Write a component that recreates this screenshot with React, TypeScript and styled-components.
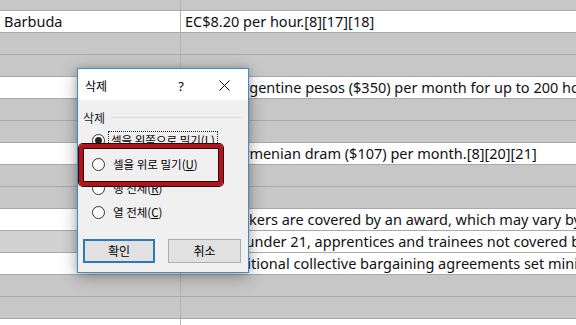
import React from 'react';
import styled, { createGlobalStyle } from 'styled-components';

const GlobalStyle = createGlobalStyle`
  html, body {
    margin: 0;
    padding: 0;
    background: #ffffff;
    overflow: hidden;
  }
  body {
    width: 576px;
    height: 325px;
  }
`;

type Tone = 'white' | 'gray' | 'light';

interface SheetRow {
  tone: Tone;
  toneA?: Tone;
  a?: string;
  b?: string;
  short?: boolean;
}

const rows: SheetRow[] = [
  { tone: 'gray', short: true },
  { tone: 'white', a: 'Barbuda', b: 'EC$8.20 per hour.[8][17][18]' },
  { tone: 'gray' },
  { tone: 'gray' },
  { tone: 'white', b: '$4,240 Argentine pesos ($350) per month for up to 200 hours.' },
  { tone: 'gray' },
  { tone: 'gray' },
  { tone: 'white', b: '55,000 Armenian dram ($107) per month.[8][20][21]' },
  { tone: 'gray' },
  { tone: 'gray' },
  { tone: 'white', b: 'Most workers are covered by an award, which may vary by industry.' },
  { tone: 'white', toneA: 'light', b: 'Workers under 21, apprentices and trainees not covered by an award.' },
  { tone: 'white', b: 'Also, additional collective bargaining agreements set minimum wages.' },
  { tone: 'gray' },
  { tone: 'gray' },
  { tone: 'white' },
];

const toneColor = (t: Tone) =>
  t === 'white' ? '#ffffff' : t === 'light' ? '#d2d2d2' : '#c7c7c7';

const Page = styled.div`
  position: relative;
  width: 576px;
  height: 325px;
  overflow: hidden;
  font-family: 'Noto Sans', 'Noto Sans CJK KR', sans-serif;
`;

const Sheet = styled.div`
  display: flex;
  flex-direction: column;
`;

const Row = styled.div<{ $short?: boolean }>`
  display: grid;
  grid-template-columns: 181px 1fr;
  height: ${({ $short }) => ($short ? '10px' : '21px')};
  border-bottom: 1px solid #a9a9a9;
  flex-shrink: 0;
`;

const Cell = styled.div<{ $tone: Tone; $first?: boolean }>`
  background: ${({ $tone }) => toneColor($tone)};
  border-right: ${({ $first }) => ($first ? '1px solid #b4b4b4' : 'none')};
  padding-left: 4px;
  font-size: 14.5px;
  line-height: 21px;
  color: #111;
  white-space: nowrap;
  overflow: hidden;
`;

const Dialog = styled.div`
  position: absolute;
  left: 77px;
  top: 68px;
  width: 170px;
  height: 203px;
  border: 1px solid #3f8ccb;
  background: #f0f0f0;
  box-shadow: 0 4px 16px rgba(0, 0, 0, 0.32), 0 0 6px rgba(0, 0, 0, 0.16);
  display: flex;
  flex-direction: column;
  font-family: 'Noto Sans CJK KR', 'Noto Sans', sans-serif;
  font-size: 12px;
  color: #000;
`;

const TitleBar = styled.div`
  height: 31px;
  background: #ffffff;
  display: flex;
  align-items: center;
  padding: 2px 0 0 7px;
  box-sizing: border-box;
`;

const Title = styled.span`
  flex: 1;
  font-size: 12px;
`;

const HelpMark = styled.span`
  width: 28px;
  font-size: 13px;
  font-family: 'Noto Sans', sans-serif;
  text-align: center;
  margin-right: 16px;
`;

const CloseButton = styled.span`
  width: 26px;
  display: flex;
  justify-content: center;
  margin-right: 11px;
`;

const Body = styled.div`
  flex: 1;
  display: flex;
  flex-direction: column;
  padding: 9px 7px 9px 5px;
`;

const GroupHeader = styled.div`
  display: flex;
  align-items: center;
  gap: 6px;
  height: 16px;
  color: #222;
`;

const GroupLine = styled.div`
  flex: 1;
  height: 1px;
  background: #dcdcdc;
`;

const RadioList = styled.div`
  display: flex;
  flex-direction: column;
  margin-top: 3px;
  padding-left: 9px;
`;

const RadioItem = styled.div`
  height: 24px;
  display: flex;
  align-items: center;
  gap: 6px;
`;

const RadioCircle = styled.span<{ $checked?: boolean }>`
  width: 11px;
  height: 11px;
  border-radius: 50%;
  border: 1px solid #333;
  background: #fff;
  display: flex;
  align-items: center;
  justify-content: center;
  flex-shrink: 0;

  &::after {
    content: '';
    width: 7px;
    height: 7px;
    border-radius: 50%;
    background: ${({ $checked }) => ($checked ? '#222' : 'transparent')};
  }
`;

const RadioLabel = styled.span<{ $focused?: boolean }>`
  padding: 0 2px;
  margin-left: ${({ $focused }) => ($focused ? '-3px' : '0')};
  border: ${({ $focused }) => ($focused ? '1px dotted #222' : 'none')};
  font-size: 11.5px;
  line-height: 16px;
  white-space: nowrap;
`;

const ButtonRow = styled.div`
  display: flex;
  justify-content: space-between;
  margin-top: auto;
`;

const Button = styled.button<{ $default?: boolean }>`
  width: ${({ $default }) => ($default ? '72px' : '73px')};
  height: 24px;
  box-sizing: border-box;
  background: #e1e1e1;
  border: ${({ $default }) => ($default ? '2px solid #2b79b9' : '1px solid #adadad')};
  font-family: 'Noto Sans CJK KR', sans-serif;
  font-size: 12px;
  color: #000;
  padding: 0;
  line-height: 1;
`;

const Highlight = styled.div`
  position: absolute;
  left: 1px;
  top: 75px;
  width: 144px;
  height: 42px;
  box-sizing: border-box;
  border: 4px solid #b3141c;
  border-radius: 4px;
  box-shadow: 0 0 0 1px #2a0505, inset 0 0 0 1px #2a0505;
  pointer-events: none;
`;

const Key = styled.u`
  text-underline-offset: 1px;
`;

const options = [
  { text: '셀을 왼쪽으로 밀기', key: 'L', checked: true },
  { text: '셀을 위로 밀기', key: 'U' },
  { text: '행 전체', key: 'R' },
  { text: '열 전체', key: 'C' },
];

export default function App() {
  return (
    <Page>
      <GlobalStyle />
      <Sheet>
        {rows.map((r, i) => (
          <Row key={i} $short={r.short}>
            <Cell $tone={r.toneA ?? r.tone} $first>
              {r.a}
            </Cell>
            <Cell $tone={r.tone}>{r.b}</Cell>
          </Row>
        ))}
      </Sheet>

      <Dialog>
        <TitleBar>
          <Title>삭제</Title>
          <HelpMark>?</HelpMark>
          <CloseButton>
            <svg width="11" height="11" viewBox="0 0 11 11">
              <path d="M0.5 0.5 L10.5 10.5 M10.5 0.5 L0.5 10.5" stroke="#111" strokeWidth="1" />
            </svg>
          </CloseButton>
        </TitleBar>
        <Body>
          <GroupHeader>
            <span>삭제</span>
            <GroupLine />
          </GroupHeader>
          <RadioList>
            {options.map((o) => (
              <RadioItem key={o.key}>
                <RadioCircle $checked={o.checked} />
                <RadioLabel $focused={o.checked}>
                  {o.text}(<Key>{o.key}</Key>)
                </RadioLabel>
              </RadioItem>
            ))}
          </RadioList>
          <ButtonRow>
            <Button $default>확인</Button>
            <Button>취소</Button>
          </ButtonRow>
        </Body>
        <Highlight />
      </Dialog>
    </Page>
  );
}
